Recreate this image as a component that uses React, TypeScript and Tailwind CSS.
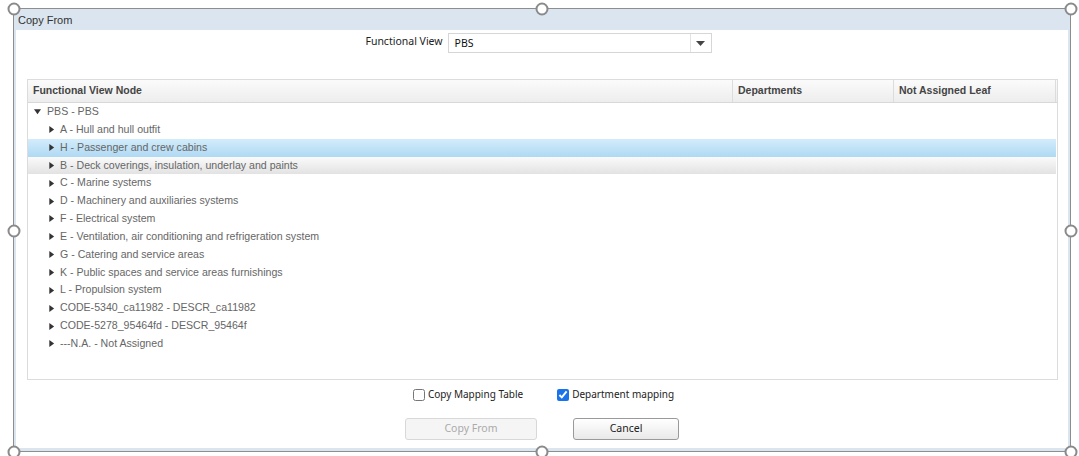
import { useState } from "react"

const nodes = [
  "A - Hull and hull outfit",
  "H - Passenger and crew cabins",
  "B - Deck coverings, insulation, underlay and paints",
  "C - Marine systems",
  "D - Machinery and auxiliaries systems",
  "F - Electrical system",
  "E - Ventilation, air conditioning and refrigeration system",
  "G - Catering and service areas",
  "K - Public spaces and service areas furnishings",
  "L - Propulsion system",
  "CODE-5340_ca11982 - DESCR_ca11982",
  "CODE-5278_95464fd - DESCR_95464f",
  "---N.A. - Not Assigned",
]

const Handle = ({ className }: { className: string }) => (
  <div
    className={`absolute w-[13px] h-[13px] rounded-full bg-white border-2 border-[#8a8a8a] -translate-x-1/2 -translate-y-1/2 ${className}`}
  />
)

const Caret = ({ open }: { open?: boolean }) => (
  <svg width="7" height="7" viewBox="0 0 8 8" className="shrink-0">
    {open ? <path d="M0 1.5h8L4 7z" fill="#333" /> : <path d="M1.5 0v8L7 4z" fill="#333" />}
  </svg>
)

const App = () => {
  const [copyMapping, setCopyMapping] = useState(false)
  const [deptMapping, setDeptMapping] = useState(true)
  const selected = 1
  const hovered = 2

  return (
    <div className="relative w-[1079px] h-[456px] bg-white overflow-hidden font-['Liberation_Sans',Arial,sans-serif]">
      <div className="absolute left-[13px] top-[8px] w-[1058px] h-[444px] border-[1.5px] border-[#8e8e8e] bg-[#dae5ef] px-[2px] pb-[3px] flex flex-col">
        {/* Title bar */}
        <div className="h-[21px] flex items-center pl-[2px] pt-[1px] text-[11px] text-[#333]">Copy From</div>

        {/* Content */}
        <div className="flex-1 bg-white flex flex-col">
          <div className="mt-[3px] flex justify-center items-start gap-[5px] pr-[7px] font-['Noto_Sans',sans-serif] text-[10.5px] text-[#222]">
            <span className="mt-[1px] leading-[14px]">Functional View</span>
            <div className="w-[264px] h-[20px] border border-[#d6d6d6] flex items-center">
              <span className="flex-1 pl-[6px] pt-[1px] text-[#111]">PBS</span>
              <div className="w-[21px] h-full border-l border-[#e3e3e3] flex items-center justify-center">
                <svg width="9" height="5" viewBox="0 0 9 5">
                  <path d="M0 0h9L4.5 5z" fill="#444" />
                </svg>
              </div>
            </div>
          </div>

          {/* Tree table */}
          <div className="mt-[26px] ml-[11px] mr-[10px] h-[301px] border border-[#dcdcdc] flex flex-col text-[10.6px]">
            <div className="h-[23px] flex bg-gradient-to-b from-[#fbfbfb] to-[#ededed] border-b border-[#d8d8d8] font-bold text-[10.5px] text-[#444]">
              <div className="w-[705px] pl-[5px] flex items-center border-r border-[#dcdcdc]">Functional View Node</div>
              <div className="w-[161px] pl-[5px] flex items-center border-r border-[#dcdcdc]">Departments</div>
              <div className="w-[162px] pl-[5px] flex items-center border-r border-[#dcdcdc]">Not Assigned Leaf</div>
            </div>
            <div className="flex flex-col text-[#666]">
              <div className="h-[17.85px] flex items-center gap-[6px] pl-[6px]">
                <Caret open />
                <span>PBS - PBS</span>
              </div>
              {nodes.map((n, i) => (
                <div
                  key={n}
                  className={`h-[17.85px] flex items-center gap-[5px] pl-[20px] mr-[1px] ${
                    i === selected
                      ? "bg-gradient-to-b from-[#d3ecfb] to-[#afd9f3]"
                      : i === hovered
                        ? "bg-gradient-to-b from-[#fbfbfb] to-[#e2e2e2]"
                        : ""
                  }`}
                >
                  <Caret />
                  <span>{n}</span>
                </div>
              ))}
            </div>
          </div>

          {/* Options */}
          <div className="mt-[7px] flex justify-center gap-[34px] font-['Noto_Sans',sans-serif] text-[10px] text-[#222] pl-[3px]">
            <label className="flex items-center gap-[3px]">
              <input
                type="checkbox"
                checked={copyMapping}
                onChange={(e) => setCopyMapping(e.target.checked)}
                className="w-[12px] h-[12px] m-0"
              />
              Copy Mapping Table
            </label>
            <label className="flex items-center gap-[3px]">
              <input
                type="checkbox"
                checked={deptMapping}
                onChange={(e) => setDeptMapping(e.target.checked)}
                className="w-[12px] h-[12px] m-0 accent-[#1a73e8]"
              />
              Department mapping
            </label>
          </div>

          <div className="mt-[16px] flex justify-center gap-[36px] font-['Noto_Sans',sans-serif] text-[10.5px]">
            <button
              disabled
              className="w-[132px] h-[22px] rounded-[3px] border border-[#d8d8d8] bg-[#f5f5f5] text-[#aaa]"
            >
              Copy From
            </button>
            <button className="w-[106px] h-[22px] rounded-[3px] border border-[#9a9a9a] bg-gradient-to-b from-white to-[#e9e9e9] text-[#222]">
              Cancel
            </button>
          </div>
        </div>
      </div>

      {/* Selection handles */}
      <Handle className="left-[13.5px] top-[8.5px]" />
      <Handle className="left-[541.5px] top-[8.5px]" />
      <Handle className="left-[1070.5px] top-[8.5px]" />
      <Handle className="left-[13.5px] top-[230.5px]" />
      <Handle className="left-[1070.5px] top-[230.5px]" />
      <Handle className="left-[13.5px] top-[451.5px]" />
      <Handle className="left-[541.5px] top-[451.5px]" />
      <Handle className="left-[1070.5px] top-[451.5px]" />
    </div>
  )
}

export default App
